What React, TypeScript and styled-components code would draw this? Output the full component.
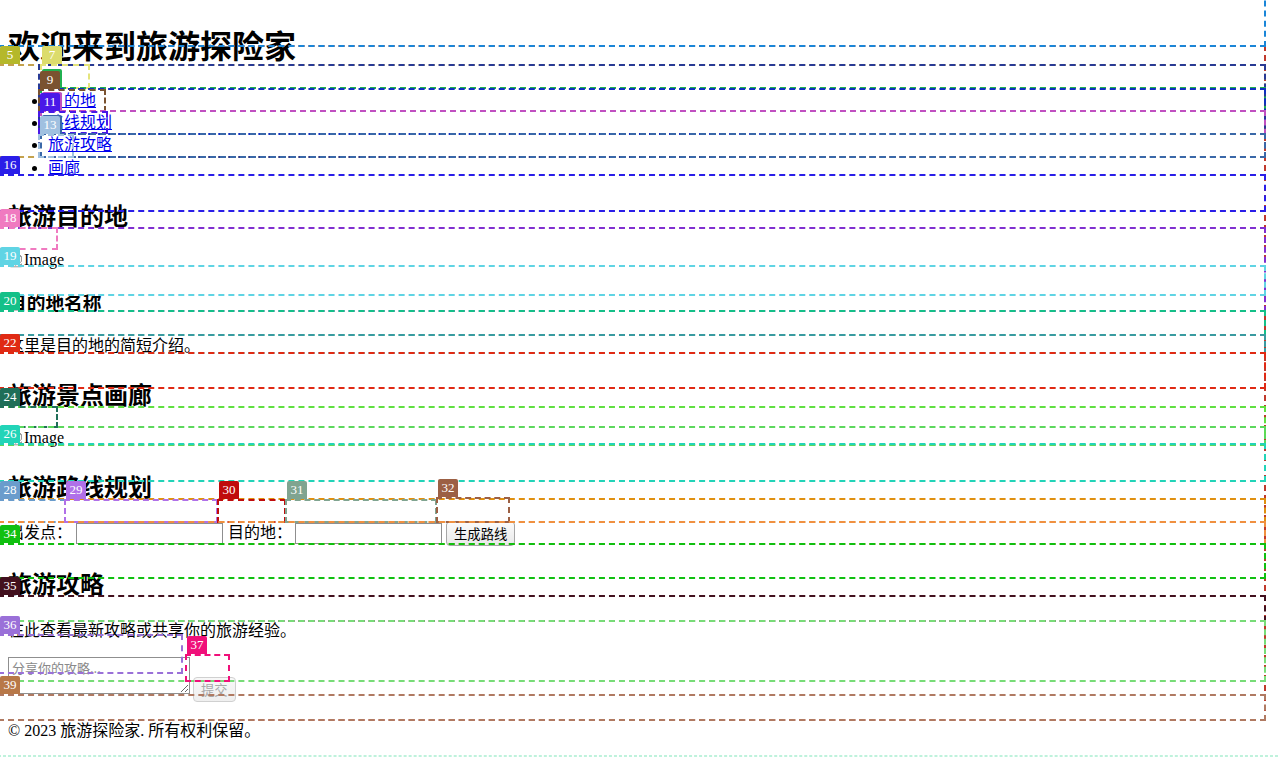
import React from "react";
import styled, { createGlobalStyle } from "styled-components";

const GlobalStyle = createGlobalStyle`
  html, body {
    margin: 0;
    padding: 0;
    overflow: hidden;
    background: #ffffff;
  }
  body {
    font-family: "Liberation Serif", "Noto Sans CJK SC", serif;
    font-size: 16px;
    line-height: 20px;
    color: #000000;
  }
`;

const Page = styled.div`
  position: relative;
  padding: 8px 8px 0;
  height: 757px;
  box-sizing: border-box;
  overflow: hidden;
`;

const Header = styled.header`
  display: block;
`;

const Title = styled.h1`
  margin: 19.3px 0 0;
  font-size: 32px;
  line-height: 40px;
  font-weight: bold;
`;

const NavList = styled.ul`
  margin: 22.35px 0 0;
  padding-left: 40px;
  list-style: disc;
`;

const NavItem = styled.li`
  line-height: 22.3px;
`;

const NavLink = styled.a`
  color: #0000ee;
  text-decoration: underline;
`;

const Section = styled.section`
  display: block;
`;

const SectionTitle = styled.h2<{ $top: number }>`
  margin: ${(p) => p.$top}px 0 0;
  font-size: 24px;
  line-height: 30px;
  font-weight: bold;
`;

const CardTitle = styled.h3<{ $top: number }>`
  margin: ${(p) => p.$top}px 0 0;
  font-size: 18.72px;
  line-height: 24px;
  font-weight: bold;
`;

const Text = styled.p<{ $top: number }>`
  margin: ${(p) => p.$top}px 0 0;
  line-height: 20px;
`;

const ImageSlot = styled.div<{ $top: number }>`
  margin-top: ${(p) => p.$top}px;
  display: flex;
  align-items: center;
  height: 20px;
`;

const BrokenIcon = styled.svg`
  width: 16px;
  height: 16px;
  flex: none;
`;

const FormRow = styled.form<{ $top: number }>`
  margin: ${(p) => p.$top}px 0 0;
  display: flex;
  align-items: center;
  height: 25px;
`;

const FieldLabel = styled.label<{ $left: number }>`
  margin-left: ${(p) => p.$left}px;
  line-height: 20px;
  white-space: nowrap;
`;

const TextInput = styled.input<{ $left: number }>`
  margin: 0 0 0 ${(p) => p.$left}px;
  width: 147px;
  height: 21px;
  box-sizing: border-box;
  border: 1px solid #8f8f8f;
  border-radius: 0;
  padding: 1px 2px;
  font: 13.33px "Liberation Sans", "Noto Sans CJK SC", sans-serif;
  background: #ffffff;
`;

const ActionButton = styled.button<{ $left: number; $top?: number }>`
  margin: ${(p) => p.$top ?? 0}px 0 0 ${(p) => p.$left}px;
  height: 25px;
  box-sizing: border-box;
  padding: 0 7px;
  border: 1px solid #a6a6a6;
  border-radius: 4px;
  background: linear-gradient(#fbfbfb, #e9e9e9);
  color: #000000;
  font: 13.33px/21px "Noto Sans CJK SC", "Liberation Sans", sans-serif;
  white-space: nowrap;
  &:disabled {
    color: #a8a8a8;
    border-color: #d0d0d0;
    background: linear-gradient(#f8f8f8, #efefef);
  }
`;

const ShareRow = styled.div<{ $top: number }>`
  margin-top: ${(p) => p.$top}px;
  display: flex;
  align-items: flex-start;
`;

const ShareBox = styled.textarea`
  margin: 0;
  width: 182px;
  height: 37px;
  box-sizing: border-box;
  border: 1px solid #8f8f8f;
  padding: 2px 3px;
  font: 13px/15px "Noto Sans CJK SC", "Liberation Sans", sans-serif;
  &::placeholder {
    color: #8a8a8a;
  }
`;

const Footer = styled.footer<{ $top: number }>`
  margin-top: ${(p) => p.$top}px;
  line-height: 20px;
`;

/* ---------- debug overlay (boxes drawn over the page) ---------- */

const Overlay = styled.div`
  position: absolute;
  left: 0;
  top: 0;
  width: 0;
  height: 0;
  pointer-events: none;
`;

const OverlayBox = styled.div<{ $c: string; $thin?: boolean }>`
  position: absolute;
  box-sizing: border-box;
  border: ${(p) => (p.$thin ? 1 : 2)}px dashed ${(p) => p.$c};
`;

const OverlayTag = styled.span<{ $c: string }>`
  position: absolute;
  left: 0;
  top: -20px;
  min-width: 20px;
  height: 18px;
  padding: 0 2px;
  box-sizing: border-box;
  background: ${(p) => p.$c};
  color: #ffffff;
  font: 13px/18px "Liberation Serif", serif;
  text-align: center;
  border-radius: 2px 2px 0 0;
`;

type BoxSpec = {
  x: number;
  y: number;
  w: number;
  h: number;
  c: string;
  tag?: string;
  tagColor?: string;
  thin?: boolean;
};

const W = 1268;

const boxes: BoxSpec[] = [
  { x: -2, y: 45, w: W, h: 676, c: "#c0392b" },
  { x: -2, y: -30, w: W, h: 77, c: "#1a86d8" },
  { x: -2, y: 64, w: W, h: 94, c: "#c4a24e", tag: "5", tagColor: "#b5b82a" },
  { x: 38, y: 64, w: 1228, h: 94, c: "#283a94" },
  { x: 40, y: 64, w: 50, h: 25, c: "#e4e47c", tag: "7", tagColor: "#dcdc6c" },
  { x: 40, y: 87, w: 1226, h: 25, c: "#20b050", tag: "8" },
  { x: 38, y: 88, w: 1228, h: 47, c: "#1030c0" },
  { x: 38, y: 89, w: 68, h: 23, c: "#7a5230", tag: "9" },
  { x: 40, y: 110, w: 1226, h: 25, c: "#c050c0", tag: "12" },
  { x: 38, y: 111, w: 70, h: 23, c: "#4a18e8", tag: "11" },
  { x: 40, y: 133, w: 1226, h: 25, c: "#3a68a8", tag: "14" },
  { x: 38, y: 134, w: 36, h: 24, c: "#a0c0e0", tag: "13" },
  { x: -2, y: 174, w: W, h: 38, c: "#2a1ee8", tag: "16" },
  { x: -2, y: 227, w: W, h: 85, c: "#8030d0" },
  { x: -2, y: 227, w: 60, h: 23, c: "#f07ac0", tag: "18" },
  { x: -2, y: 265, w: W, h: 31, c: "#60d4e4", tag: "19" },
  { x: -2, y: 310, w: W, h: 26, c: "#14c088", tag: "20" },
  { x: -2, y: 334, w: W, h: 20, c: "#3a9aa0" },
  { x: -2, y: 352, w: W, h: 37, c: "#e02a14", tag: "22" },
  { x: -2, y: 406, w: W, h: 40, c: "#60e040" },
  { x: -2, y: 406, w: 60, h: 22, c: "#1f6e58", tag: "24" },
  { x: -2, y: 426, w: W, h: 20, c: "#5cd85c" },
  { x: -2, y: 443, w: W, h: 39, c: "#22d4b8", tag: "26" },
  { x: -2, y: 498, w: W, h: 25, c: "#e09010" },
  { x: -2, y: 499, w: 68, h: 24, c: "#6a9ccc", tag: "28" },
  { x: 64, y: 499, w: 154, h: 24, c: "#b070e8", tag: "29" },
  { x: 217, y: 499, w: 69, h: 24, c: "#c00c0c", tag: "30" },
  { x: 285, y: 499, w: 152, h: 24, c: "#80a490", tag: "31" },
  { x: 436, y: 497, w: 74, h: 26, c: "#9c6044", tag: "32" },
  { x: -2, y: 521, w: W, h: 24, c: "#f09040" },
  { x: -2, y: 543, w: W, h: 36, c: "#10c010", tag: "34" },
  { x: -2, y: 595, w: W, h: 27, c: "#42101e", tag: "35" },
  { x: -2, y: 620, w: W, h: 62, c: "#78dc78" },
  { x: -2, y: 634, w: 185, h: 40, c: "#9a70d8", tag: "36" },
  { x: 185, y: 654, w: 45, h: 28, c: "#f0107a", tag: "37" },
  { x: -2, y: 694, w: W, h: 27, c: "#b07a62", tag: "39", tagColor: "#b87848" },
  { x: -2, y: 755, w: 1290, h: 2, c: "#bff2dc", thin: true },
];

const DebugOverlay: React.FC = () => (
  <Overlay aria-hidden="true">
    {boxes.map((b, i) => (
      <OverlayBox
        key={i}
        $c={b.c}
        $thin={b.thin}
        style={{ left: b.x, top: b.y, width: b.w, height: b.h }}
      >
        {b.tag && <OverlayTag $c={b.tagColor ?? b.c}>{b.tag}</OverlayTag>}
      </OverlayBox>
    ))}
  </Overlay>
);

const BrokenImage: React.FC<{ top: number }> = ({ top }) => (
  <ImageSlot $top={top}>
    <BrokenIcon viewBox="0 0 16 16">
      <path d="M2.5 1.5h8l3 3v5l-2 1.5-2-1.5-2 1.5-2-1.5-2 1.5-1-.8z" fill="#f4f4f4" stroke="#9a9a9a" strokeWidth="1" />
      <path d="M10.5 1.5v3h3" fill="none" stroke="#9a9a9a" strokeWidth="1" />
      <path d="M2.5 12.5l1 .8 2-1.5 2 1.5 2-1.5 2 1.5 2-1.5v3h-11z" fill="#f4f4f4" stroke="#9a9a9a" strokeWidth="1" />
      <rect x="4" y="4" width="5" height="3" fill="#7fb4e6" />
      <path d="M4 8l2-2 2 2z" fill="#5aa04a" />
    </BrokenIcon>
    Image
  </ImageSlot>
);

export default function App() {
  return (
    <>
      <GlobalStyle />
      <Page>
        <Header>
          <Title>欢迎来到旅游探险家</Title>
          <nav>
            <NavList>
              <NavItem><NavLink href="#destinations">目的地</NavLink></NavItem>
              <NavItem><NavLink href="#routes">路线规划</NavLink></NavItem>
              <NavItem><NavLink href="#guides">旅游攻略</NavLink></NavItem>
              <NavItem><NavLink href="#gallery">画廊</NavLink></NavItem>
            </NavList>
          </nav>
        </Header>

        <Section id="destinations">
          <SectionTitle $top={23.15}>旅游目的地</SectionTitle>
          <div>
            <BrokenImage top={18} />
            <CardTitle $top={21.8}>目的地名称</CardTitle>
            <Text $top={19.9}>这里是目的地的简短介绍。</Text>
          </div>
        </Section>

        <Section id="gallery">
          <SectionTitle $top={25.3}>旅游景点画廊</SectionTitle>
          <BrokenImage top={17} />
        </Section>

        <Section id="routes">
          <SectionTitle $top={25}>旅游路线规划</SectionTitle>
          <FormRow $top={18} onSubmit={(e) => e.preventDefault()}>
            <FieldLabel $left={0}>出发点：</FieldLabel>
            <TextInput $left={4} type="text" />
            <FieldLabel $left={5}>目的地：</FieldLabel>
            <TextInput $left={3} type="text" />
            <ActionButton $left={4} type="submit">生成路线</ActionButton>
          </FormRow>
        </Section>

        <Section id="guides">
          <SectionTitle $top={24}>旅游攻略</SectionTitle>
          <Text $top={20.7}>在此查看最新攻略或共享你的旅游经验。</Text>
          <ShareRow $top={16.3}>
            <ShareBox placeholder="分享你的攻略..." />
            <ActionButton $left={3} $top={20} type="button" disabled>
              提交
            </ActionButton>
          </ShareRow>
        </Section>

        <Footer $top={18.7}>© 2023 旅游探险家. 所有权利保留。</Footer>

        <DebugOverlay />
      </Page>
    </>
  );
}
